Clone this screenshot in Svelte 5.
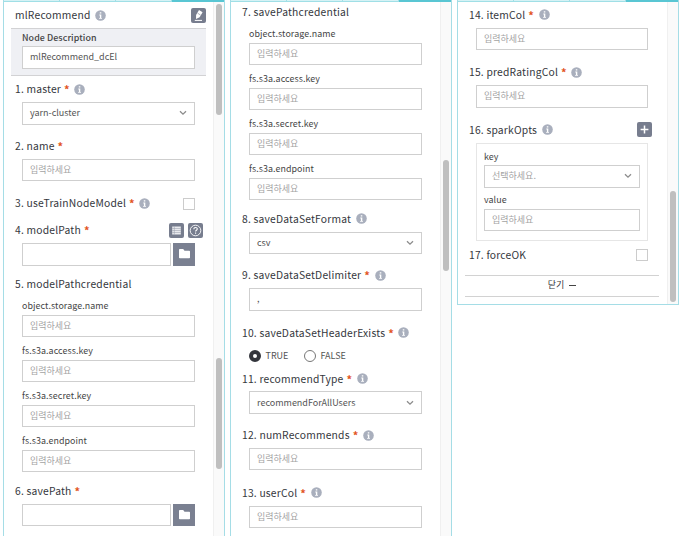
<script>
  const hint = '입력하세요';
  const credential = ['object.storage.name', 'fs.s3a.access.key', 'fs.s3a.secret.key', 'fs.s3a.endpoint'];

  // gap: space between a section and the one above it
  const panels = [
    {
      thumbs: [{ top: 2, height: 111 }, { top: 356, height: 111 }],
      sections: [
        { kind: 'header', title: 'mlRecommend', info: true, gap: 5.5 },
        { kind: 'input', title: '1. master', req: true, info: true, select: true, value: 'yarn-cluster', gap: 5.5 },
        { kind: 'input', title: '2. name', req: true, gap: 13.5 },
        { kind: 'check', title: '3. useTrainNodeModel', req: true, info: true, gap: 14.5 },
        { kind: 'path', title: '4. modelPath', req: true, tools: true, gap: 11 },
        { kind: 'credential', title: '5. modelPathcredential', gap: 10.5 },
        { kind: 'path', title: '6. savePath', req: true, gap: 11 }
      ]
    },
    {
      thumbs: [{ top: 158, height: 111 }],
      sections: [
        { kind: 'credential', title: '7. savePathcredential', gap: 2 },
        { kind: 'input', title: '8. saveDataSetFormat', info: true, select: true, value: 'csv', gap: 11 },
        { kind: 'input', title: '9. saveDataSetDelimiter', req: true, info: true, value: ',', gap: 13.3 },
        { kind: 'radio', title: '10. saveDataSetHeaderExists', req: true, info: true, gap: 14.8 },
        { kind: 'input', title: '11. recommendType', req: true, info: true, select: true, value: 'recommendForAllUsers', gap: 6.6 },
        { kind: 'input', title: '12. numRecommends', req: true, info: true, gap: 13.5 },
        { kind: 'input', title: '13. userCol', req: true, info: true, gap: 14.8 }
      ]
    },
    {
      thumbs: [{ top: 189, height: 111 }],
      short: true,
      sections: [
        { kind: 'input', title: '14. itemCol', req: true, info: true, gap: 5 },
        { kind: 'input', title: '15. predRatingCol', req: true, info: true, gap: 14.6 },
        { kind: 'opts', title: '16. sparkOpts', info: true, gap: 14.6 },
        { kind: 'check', title: '17. forceOK', gap: 5.8 },
        { kind: 'close', gap: 12 }
      ]
    }
  ];
</script>

{#snippet infoIcon()}
  <svg class="info" viewBox="0 0 11 11"><circle cx="5.5" cy="5.5" r="5.3" fill="#a9afbd" /><path d="M4.3 4.6h2v3.3h.7v.8H4.1v-.8h.8V5.4h-.6zM4.8 2.2h1.5v1.4H4.8z" fill="#fff" /></svg>
{/snippet}

{#snippet field(value, select = false, placeholder = hint)}
  <div class="input">
    <span class:ph={!value}>{value || placeholder}</span>
    {#if select}
      <svg class="chev" width="8" height="6" viewBox="0 0 8 6"><path d="M1 1.2l3 3 3-3" fill="none" stroke="#8c8c8c" stroke-width="1.3" /></svg>
    {/if}
  </div>
{/snippet}

<main>
  {#each panels as panel}
    <section class="panel" class:short={panel.short}>
      <div class="tabs"><i></i><i></i><i></i><i class="on"></i></div>
      <div class="body">
        <div class="content">
          {#each panel.sections as s}
            <div class="section" style:margin-top="{s.gap}px">
              {#if s.title}
                <div class="title">
                  <span>{s.title}</span>
                  {#if s.req}<b>*</b>{/if}
                  {#if s.info}{@render infoIcon()}{/if}
                  {#if s.kind === 'header'}
                    <svg class="btn edit" viewBox="0 0 15 15"><rect width="15" height="15" rx="2" fill="#777d8e" /><path d="M8 2l3.6 2.2-3 5.1-3.6 1.6.1-3.9z" fill="#fff" /><path d="M6.6 5.2l2.9 1.8" stroke="#777d8e" stroke-width=".6" /><path d="M3.8 12.4h7.2" stroke="#fff" stroke-width="1" /></svg>
                  {:else if s.tools}
                    <span class="tools">
                      <svg class="btn" viewBox="0 0 15 15"><rect width="15" height="15" rx="2" fill="#777d8e" /><path d="M3.2 3.5h8.6v8H3.2z" fill="#e9eaee" /><path d="M5.3 3.5v8M3.2 5.5h8.6M3.2 7.5h8.6M3.2 9.5h8.6" stroke="#9298a6" stroke-width=".5" /></svg>
                      <svg class="btn" viewBox="0 0 15 15"><rect width="15" height="15" rx="2" fill="#777d8e" /><circle cx="7.5" cy="7.5" r="5.3" fill="none" stroke="#fff" stroke-width=".9" /><path d="M5.8 6.2c0-2.2 3.5-2.1 3.5-.2 0 1.2-1.7 1.2-1.7 2.5M7.6 9.5v1.2" fill="none" stroke="#fff" stroke-width="1.1" /></svg>
                    </span>
                  {:else if s.kind === 'check'}
                    <span class="box"></span>
                  {:else if s.kind === 'opts'}
                    <svg class="btn plus" viewBox="0 0 15 15"><rect width="15" height="15" rx="2" fill="#777d8e" /><path d="M7.5 3.6v7.8M3.6 7.5h7.8" stroke="#fff" stroke-width="1.5" /></svg>
                  {/if}
                </div>
              {/if}

              {#if s.kind === 'header'}
                <div class="desc">
                  <div class="label">Node Description</div>
                  {@render field('mlRecommend_dcEl')}
                </div>
              {:else if s.kind === 'input'}
                <div class="line">{@render field(s.value, s.select)}</div>
              {:else if s.kind === 'path'}
                <div class="line path">
                  <div class="input"></div>
                  <div class="folder"><svg width="11" height="10" viewBox="0 0 11 10"><path d="M0 .8Q0 0 .8 0h3.4l1.3 1.7h4.7q.8 0 .8.8v6q0 .8-.8.8H.8Q0 9.3 0 8.5z" fill="#fff" /></svg></div>
                </div>
              {:else if s.kind === 'credential'}
                <div class="cred">
                  {#each credential as name}
                    <div class="label">{name}</div>
                    {@render field('')}
                  {/each}
                </div>
              {:else if s.kind === 'radio'}
                <div class="radios">
                  <span class="dot on"></span><span>TRUE</span>
                  <span class="dot second"></span><span>FALSE</span>
                </div>
              {:else if s.kind === 'opts'}
                <div class="opts">
                  <div class="label">key</div>
                  {@render field('', true, '선택하세요.')}
                  <div class="label">value</div>
                  {@render field('')}
                </div>
              {:else if s.kind === 'close'}
                <div class="close"><span>닫기</span><i></i></div>
              {/if}
            </div>
          {/each}
        </div>
        <div class="track">
          {#each panel.thumbs as t}
            <div class="thumb" style:top="{t.top}px" style:height="{t.height}px"></div>
          {/each}
        </div>
      </div>
    </section>
  {/each}
</main>

<style>
  :global(body) { background: #fff; }
  main {
    display: flex;
    align-items: flex-start;
    gap: 5px;
    padding-left: 3px;
    width: 680px;
    height: 542px;
    box-sizing: border-box;
    font-family: "Noto Sans CJK KR", sans-serif;
    color: #35373d;
    overflow: hidden;
  }
  .panel {
    --edge: 18px;
    box-sizing: border-box;
    flex: none;
    width: 222px;
    height: 536px;
    border: solid #a5dde6;
    border-width: 0 1px;
    display: flex;
    flex-direction: column;
    overflow: hidden;
  }
  .panel.short { --edge: 19px; height: 305px; border-bottom-width: 1px; }
  .tabs { display: flex; height: 2px; flex: none; gap: 1px; background: #a0dfe6; }
  .tabs i { width: 55px; height: 1px; background: #d5f2f5; }
  .tabs i.on { flex: 1; height: 2px; background: #59c6d3; }
  .body { display: flex; flex: 1; min-height: 0; }
  .content { flex: 1; min-width: 0; display: flex; flex-direction: column; }
  .track { position: relative; width: 11px; flex: none; background: #fafafa; border-left: 1px solid #f0f0f0; box-sizing: border-box; }
  .thumb { position: absolute; left: 2px; width: 6px; border-radius: 3px; background: #bfbfbf; }
  .section { flex: none; }
  .title { box-sizing: border-box; display: flex; align-items: center; height: 16px; padding: 0 0 .8px 11px; font-size: 10.3px; font-weight: 400; letter-spacing: .2px; line-height: 14px; white-space: nowrap; }
  .title b { color: #e2551f; margin-left: 3px; font-size: 11px; font-weight: 700; }
  .info { width: 11px; height: 11px; margin-left: 4.500px; flex: none; }
  .title b + .info { margin-left: 4.500px; }
  .btn { width: 15px; height: 15px; flex: none; display: block; }
  .edit { margin-left: auto; margin-right: 7px; }
  .plus { margin-left: auto; margin-right: 15px; }
  .tools { margin-left: auto; margin-right: 10px; display: flex; gap: 4px; }
  .box { box-sizing: border-box; width: 12px; height: 12px; margin: 1.5px var(--edge) 0 auto; border: 1px solid #ccc; }
  .input { box-sizing: border-box; height: 22.5px; border: 1px solid #cfcfcf; background: #fff; display: flex; align-items: center; justify-content: space-between; padding: 0 7px; font-size: 9px; line-height: 16px; color: #555; }
  .ph { color: #a3a3a3; }
  .line { margin: 4.5px var(--edge) 0 18px; }
  .path { display: flex; gap: 2px; }
  .path .input { flex: 1; }
  .folder { width: 22px; height: 22.5px; background: #7a8091; display: flex; align-items: center; justify-content: center; }
  .label { height: 14px; line-height: 14px; font-size: 8.9px; letter-spacing: .08px; color: #444; margin-bottom: 1.5px; }
  .desc { box-sizing: border-box; height: 48px; margin: 4.5px 7px 0 7px; padding: 2px 11px 0; background: #eff0f4; border: solid #d2d2d4; border-width: 1px 0; }
  .desc .label { font-weight: 500; margin-bottom: 1px; }
  .cred { margin: 7px 18px 0 18px; }
  .cred .label:not(:first-child) { margin-top: 7.1px; }
  .radios { display: flex; align-items: center; height: 16px; margin: 7px 0 0 18px; font-size: 9px; color: #555; line-height: 16px; }
  .dot { box-sizing: border-box; width: 12px; height: 12px; border: 1px solid #777; border-radius: 50%; margin-right: 4.5px; }
  .dot.on { border: 4px solid #33353c; }
  .second { margin-left: 15.5px; }
  .opts { box-sizing: border-box; height: 98px; margin: 5px var(--edge) 0 18px; padding: 5.5px 7px; border: 1px solid #e6e6e6; }
  .opts .input + .label { margin-top: 5.5px; }
  .close { box-sizing: border-box; display: flex; align-items: center; justify-content: center; gap: 5px; height: 22px; margin: 0 8px 0 7px; border: solid #d2d2d2; border-width: 1px 0; font-size: 9px; line-height: 18px; padding-bottom: 1px; }
  .close i { width: 7px; height: 1px; background: #444; }
</style>
